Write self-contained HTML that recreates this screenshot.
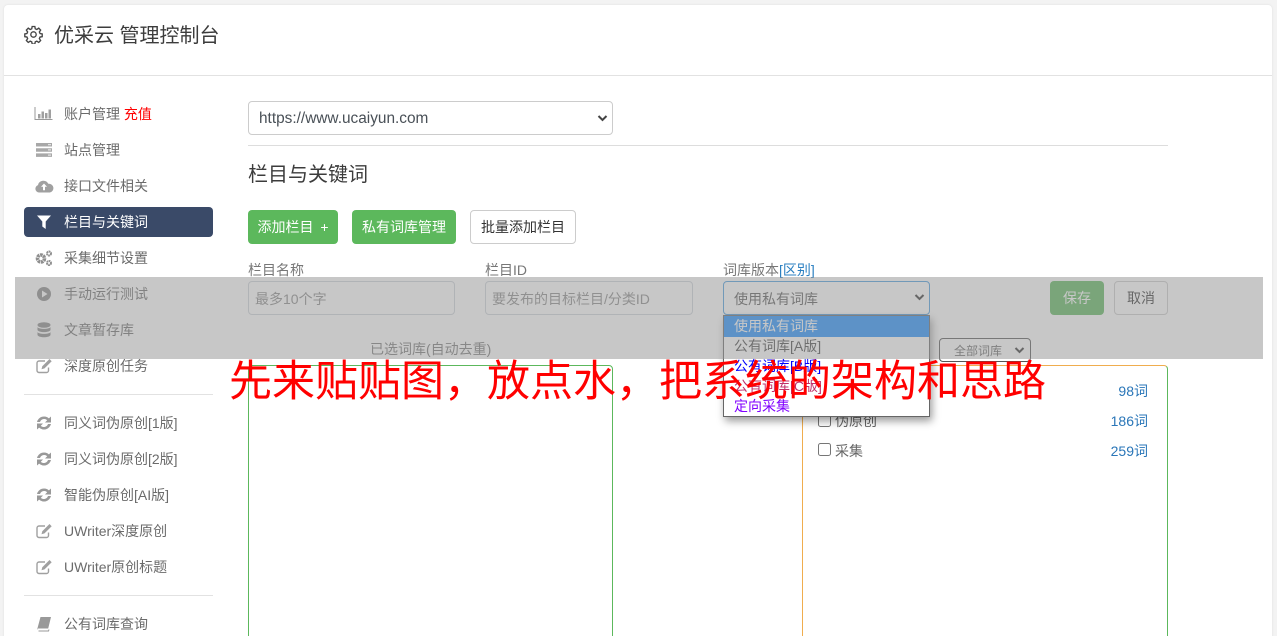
<!DOCTYPE html>
<html lang="zh">
<head>
<meta charset="utf-8">
<title>优采云 管理控制台</title>
<style>
html,body{margin:0;padding:0;width:1277px;height:636px;overflow:hidden}
body{background:#f3f3f3;font-family:"Liberation Sans","Noto Sans CJK SC",sans-serif;font-size:14px;color:#666}
*{box-sizing:border-box}
#root{position:absolute;left:0;top:0;width:1277px;height:636px;overflow:hidden}
.a{position:absolute;white-space:nowrap}
#card{left:4px;top:5px;width:1268px;height:640px;background:#fff;border-radius:4px;box-shadow:0 0 2px #ddd}
.nav{left:64px;height:20px;line-height:20px;font-size:14px;color:#6b6b6b}
.ic{left:34px;width:20px;height:20px}
.hr{background:#e2e2e2;height:1px}
.box{border:1px solid #ced4da;border-radius:4px;background:#fff}
.btn{height:34px;line-height:34px;text-align:center;border-radius:4px;font-size:14px}
.g{background:#5cb85c;color:#fff}
.lbl{font-size:14px;color:#777;line-height:20px;height:20px}
.ph{font-size:14px;color:#8a8a8a;line-height:20px;height:20px}
.opt{left:724px;width:205px;height:20px;line-height:20px;padding-left:10px;font-size:14px}
.cnt{font-size:14px;color:#2a76b8;line-height:20px;height:20px;text-align:right;width:60px;left:1088px}
.cb{left:818px;width:13px;height:13px;border:1px solid #767676;border-radius:2.5px;background:#fff}
</style>
</head>
<body>
<div id="root">
<div class="a" id="card"></div>

<svg class="a" style="left:24px;top:25px" width="19" height="19" viewBox="0 0 24 24" fill="none" stroke="#444" stroke-width="1.7"><circle cx="12" cy="12" r="3.4"/><path d="M10.3 2.500h3.400l.5 2.800 2 .9 2.400-1.600 2.400 2.400-1.600 2.400.9 2 2.700.5v3.400l-2.700.5-.9 2 1.600 2.400-2.400 2.400-2.400-1.600-2 .9-.5 2.700h-3.400l-.5-2.700-2-.9-2.400 1.600-2.400-2.400 1.600-2.400-.9-2-2.700-.5v-3.400l2.700-.5.9-2-1.600-2.400 2.400-2.400 2.400 1.600 2-.9z" transform="translate(0 -.6)"/></svg>
<div class="a" style="left:54px;top:22px;height:28px;line-height:28px;font-size:20px;color:#3c3c3c">优采云 管理控制台</div>
<div class="a hr" style="left:4px;top:75px;width:1268px"></div>

<!-- Sidebar -->
<div class="a" style="left:24px;top:207px;width:189px;height:30px;background:#3a4a68;border-radius:4px"></div>

<svg class="a ic" style="top:104px" viewBox="0 0 20 20"><path d="M1 3v12.500h17.500" fill="none" stroke="#999" stroke-width="1"/><path d="M4 10h2.500v4.500H4zM7.500 7.500H10v7H7.500zM11 9h2.500v5.500H11zM14.500 5.500H17v9h-2.500z" fill="#a0a0a0"/></svg>
<div class="a nav" style="top:104px">账户管理 <span style="color:#f00">充值</span></div>

<svg class="a ic" style="top:140px" viewBox="0 0 20 20" fill="#a8a8a8"><path d="M2 3h16v3.500H2zM2 8.200h16v3.500H2zM2 13.400h16v3.500H2z"/><path d="M14 4h3v1.200h-3zM14 9.300h3v1.200h-3zM14 14.500h3v1.200h-3z" fill="#e4e4e4"/></svg>
<div class="a nav" style="top:140px">站点管理</div>

<svg class="a ic" style="top:176px" viewBox="0 0 20 20"><path d="M5 16.500a3.800 3.800 0 0 1-1-7.400 5.500 5.500 0 0 1 10.300-1.300 4.400 4.400 0 0 1 1.400 8.700z" fill="#a0a0a0"/><path d="M10 7.500l3 3.300h-2v3.500H9v-3.500H7z" fill="#fff"/></svg>
<div class="a nav" style="top:176px">接口文件相关</div>

<svg class="a ic" style="top:212px" viewBox="0 0 20 20"><path d="M3 3.500h14l-5.300 6v7.500l-3.400-2.500v-5z" fill="#fff"/></svg>
<div class="a nav" style="top:212px;color:#fff">栏目与关键词</div>

<svg class="a ic" style="top:248px" viewBox="0 0 20 20" fill="none" stroke="#8f8f8f"><circle cx="7" cy="10.500" r="3.500" stroke-width="3.600" stroke-dasharray="2.500 .6"/><circle cx="15" cy="5.500" r="2" stroke-width="2" stroke-dasharray="1.700 .5"/><circle cx="15" cy="15" r="2" stroke-width="2" stroke-dasharray="1.700 .5"/></svg>
<div class="a nav" style="top:248px">采集细节设置</div>

<svg class="a ic" style="top:284px" viewBox="0 0 20 20"><circle cx="10" cy="10" r="7" fill="#888"/><path d="M8 6.500l5.500 3.500L8 13.500z" fill="#fff"/></svg>
<div class="a nav" style="top:284px">手动运行测试</div>

<svg class="a ic" style="top:320px" viewBox="0 0 20 20" fill="#888"><ellipse cx="10" cy="5" rx="6.500" ry="2.800"/><path d="M3.500 7c1 2.500 12 2.500 13 0v3c-1 2.800-12 2.800-13 0zM3.500 12c1 2.500 12 2.500 13 0v3c-1 3-12 3-13 0z"/></svg>
<div class="a nav" style="top:320px">文章暂存库</div>

<svg class="a ic" style="top:356px" viewBox="0 0 20 20"><path d="M14.500 11.500v3a2 2 0 0 1-2 2H5a2 2 0 0 1-2-2V7a2 2 0 0 1 2-2h6" fill="none" stroke="#a0a0a0" stroke-width="1.400"/><path d="M15.500 3l2.200 2.200-7.200 7.200-3 .8.800-3z" fill="#a0a0a0"/></svg>
<div class="a nav" style="top:356px">深度原创任务</div>

<div class="a hr" style="left:24px;top:394px;width:189px"></div>

<svg class="a ic" style="top:413px" viewBox="0 0 20 20" fill="#999"><path d="M3 9a7.200 7.200 0 0 1 11.900-3.600L17 3.500v6h-6l2.200-2.200A4.300 4.300 0 0 0 6 9zM17 11a7.200 7.200 0 0 1-11.900 3.600L3 16.500v-6h6l-2.200 2.200A4.300 4.300 0 0 0 14 11z"/></svg>
<div class="a nav" style="top:413px">同义词伪原创[1版]</div>

<svg class="a ic" style="top:449px" viewBox="0 0 20 20" fill="#999"><path d="M3 9a7.200 7.200 0 0 1 11.900-3.600L17 3.500v6h-6l2.200-2.200A4.300 4.300 0 0 0 6 9zM17 11a7.200 7.200 0 0 1-11.900 3.600L3 16.500v-6h6l-2.200 2.200A4.300 4.300 0 0 0 14 11z"/></svg>
<div class="a nav" style="top:449px">同义词伪原创[2版]</div>

<svg class="a ic" style="top:485px" viewBox="0 0 20 20" fill="#999"><path d="M3 9a7.200 7.200 0 0 1 11.900-3.600L17 3.500v6h-6l2.200-2.200A4.300 4.300 0 0 0 6 9zM17 11a7.200 7.200 0 0 1-11.900 3.600L3 16.500v-6h6l-2.200 2.200A4.300 4.300 0 0 0 14 11z"/></svg>
<div class="a nav" style="top:485px">智能伪原创[AI版]</div>

<svg class="a ic" style="top:521px" viewBox="0 0 20 20"><path d="M14.500 11.500v3a2 2 0 0 1-2 2H5a2 2 0 0 1-2-2V7a2 2 0 0 1 2-2h6" fill="none" stroke="#a0a0a0" stroke-width="1.400"/><path d="M15.500 3l2.200 2.200-7.200 7.200-3 .8.800-3z" fill="#a0a0a0"/></svg>
<div class="a nav" style="top:521px">UWriter深度原创</div>

<svg class="a ic" style="top:557px" viewBox="0 0 20 20"><path d="M14.500 11.500v3a2 2 0 0 1-2 2H5a2 2 0 0 1-2-2V7a2 2 0 0 1 2-2h6" fill="none" stroke="#a0a0a0" stroke-width="1.400"/><path d="M15.500 3l2.200 2.200-7.200 7.200-3 .8.800-3z" fill="#a0a0a0"/></svg>
<div class="a nav" style="top:557px">UWriter原创标题</div>

<div class="a hr" style="left:24px;top:595px;width:189px"></div>

<svg class="a ic" style="top:614px" viewBox="0 0 20 20"><path d="M4.500 17h10l.5-1.500" fill="none" stroke="#999" stroke-width="1"/><path d="M6.500 3h10.500l-2.800 11.500H4L3 16z" fill="#999"/></svg>
<div class="a nav" style="top:614px">公有词库查询</div>

<!-- Main -->
<div class="a box" style="left:248px;top:101px;width:365px;height:34px;border-color:#ccc"></div>
<div class="a" style="left:259px;top:109px;height:20px;line-height:20px;font-size:15.4px;color:#495057">https://www.ucaiyun.com</div>
<svg class="a" style="left:597px;top:114px" width="11" height="9" viewBox="0 0 11 9"><path d="M1.500 2l4 4 4-4" fill="none" stroke="#444" stroke-width="2"/></svg>
<div class="a hr" style="left:248px;top:145px;width:920px;background:#ddd"></div>
<div class="a" style="left:248px;top:161px;height:28px;line-height:28px;font-size:20px;color:#3c3c3c">栏目与关键词</div>

<div class="a btn g" style="left:248px;top:210px;width:90px;word-spacing:3px">添加栏目 +</div>
<div class="a btn g" style="left:352px;top:210px;width:104px">私有词库管理</div>
<div class="a btn" style="left:470px;top:210px;width:106px;border:1px solid #ccc;color:#333;background:#fff;line-height:33px">批量添加栏目</div>

<div class="a lbl" style="left:248px;top:260px">栏目名称</div>
<div class="a lbl" style="left:485px;top:260px">栏目ID</div>
<div class="a lbl" style="left:723px;top:260px">词库版本<span style="color:#2a7fc1">[区别]</span></div>

<div class="a box" style="left:248px;top:281px;width:207px;height:34px"></div>
<div class="a ph" style="left:255px;top:289px">最多10个字</div>
<div class="a box" style="left:485px;top:281px;width:208px;height:34px"></div>
<div class="a ph" style="left:492px;top:289px">要发布的目标栏目/分类ID</div>
<div class="a box" style="left:723px;top:281px;width:207px;height:34px;border-color:#4a9de0"></div>
<div class="a ph" style="left:734px;top:289px;color:#555">使用私有词库</div>
<svg class="a" style="left:914px;top:293px" width="11" height="9" viewBox="0 0 11 9"><path d="M1.500 2l4 4 4-4" fill="none" stroke="#333" stroke-width="2"/></svg>

<div class="a btn g" style="left:1050px;top:281px;width:54px">保存</div>
<div class="a btn" style="left:1114px;top:281px;width:54px;border:1px solid #ccc;color:#333;background:#fff;line-height:33px">取消</div>

<div class="a lbl" style="left:370px;top:339px">已选词库(自动去重)</div>
<div class="a" style="left:939px;top:338px;width:92px;height:24px;border:1px solid #555;border-radius:4px;background:#fff;font-size:12px;line-height:24px;padding-left:14px;color:#666">全部词库</div>
<svg class="a" style="left:1014px;top:346px" width="11" height="9" viewBox="0 0 11 9"><path d="M1.500 2l4 4 4-4" fill="none" stroke="#333" stroke-width="2"/></svg>

<div class="a" style="left:248px;top:365px;width:365px;height:290px;border:1px solid #5cb85c;border-radius:4px 4px 0 0"></div>
<div class="a" style="left:802px;top:365px;width:366px;height:290px;border:1px solid #f0ad4e;border-right-color:#5cb85c;border-radius:4px 4px 0 0"></div>

<div class="a cnt" style="top:381px">98词</div>
<div class="a cb" style="top:414px"></div>
<div class="a" style="left:835px;top:411px;height:20px;line-height:20px;color:#666">伪原创</div>
<div class="a cnt" style="top:411px">186词</div>
<div class="a cb" style="top:443px"></div>
<div class="a" style="left:835px;top:441px;height:20px;line-height:20px;color:#666">采集</div>
<div class="a cnt" style="top:441px">259词</div>

<!-- Dropdown -->
<div class="a" style="left:723px;top:315px;width:207px;height:102px;background:#fff;border:1px solid #666;box-shadow:2px 4px 8px rgba(0,0,0,.4)"></div>
<div class="a opt" style="top:316px;height:21px;line-height:21px;background:#1e8fff;color:#fff">使用私有词库</div>
<div class="a opt" style="top:336px;color:#444">公有词库[A版]</div>
<div class="a opt" style="top:356px;color:#0000ff">公有词库[B版]</div>
<div class="a opt" style="top:376px;color:#c0306a">公有词库[C版]</div>
<div class="a opt" style="top:396px;color:#8000ff">定向采集</div>

<!-- Gray strip -->
<div class="a" style="left:15px;top:277px;width:1248px;height:82px;background:rgba(150,150,150,.53)"></div>

<!-- Red headline -->
<div class="a" style="left:229px;top:351px;height:62px;line-height:62px;font-size:43px;color:#f00">先来贴贴图，放点水，把系统的架构和思路</div>
</div>
</body>
</html>
